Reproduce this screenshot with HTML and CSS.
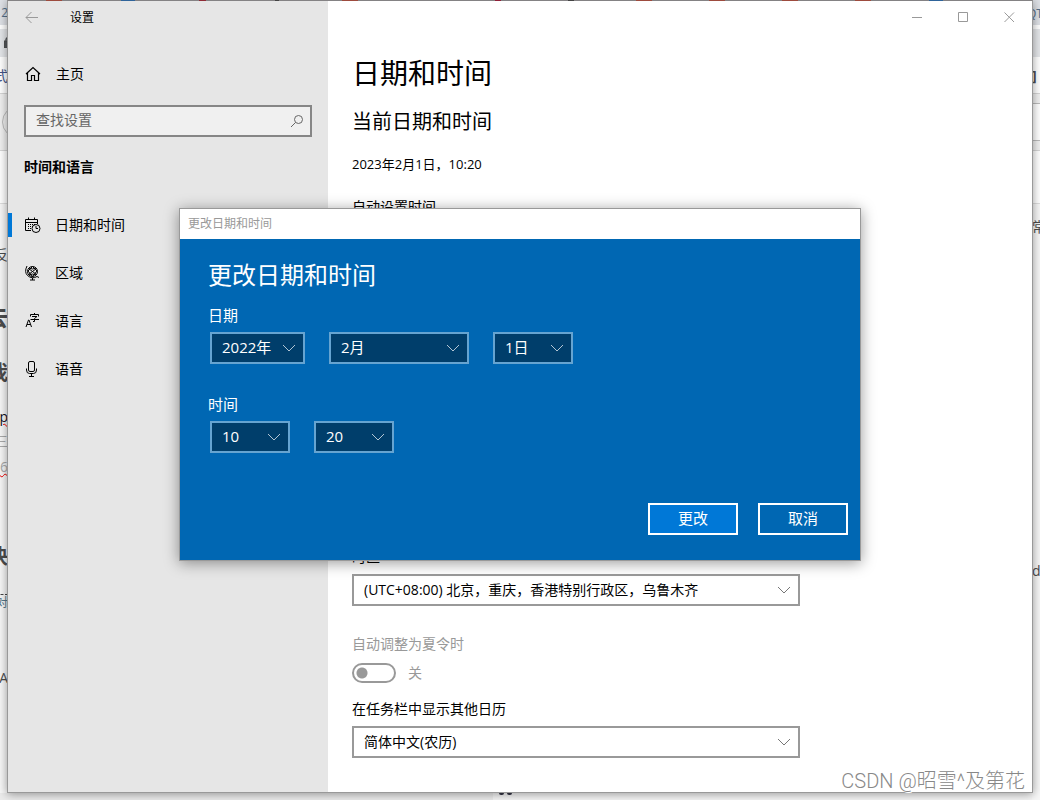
FILE: index.html
```html
<!DOCTYPE html>
<html lang="zh-CN">
<head>
<meta charset="utf-8">
<title>设置</title>
<link rel="stylesheet" href="styles.css">
</head>
<body>
<div class="desktop">
  <div class="edge edge-left" aria-hidden="true">
    <span class="bit tab" style="top:3px">2</span>
    <svg class="lock" viewBox="0 0 8 11"><rect y="4" width="8" height="7" fill="#55585c"/><path d="M2 4V3a2.500 2.500 0 0 1 5 0v1" fill="none" stroke="#55585c" stroke-width="1.500"/></svg>
    <span class="bit link" style="top:66px">式</span>
    <span class="ring"></span>
    <span class="bit" style="top:245px">反</span>
    <span class="bit big" style="top:307px">去</span>
    <span class="bit mid" style="top:363px">我</span>
    <span class="bit typo dark" style="top:407px">p</span>
    <span class="bit faint" style="top:431px">三</span>
    <span class="bit faint typo" style="top:457px">6</span>
    <span class="bit mid" style="top:547px">决</span>
    <span class="bit dash" style="top:594px">对</span>
    <span class="bit" style="top:668px">A</span>
  </div>
  <div class="edge edge-right" aria-hidden="true">
    <span class="bit tab" style="top:4px">QT</span>
    <span class="bit bracket" style="top:66px">]</span>
    <span class="panel"></span>
    <span class="bit" style="top:217px">常</span>
    <span class="bit" style="top:561px">d</span>
  </div>
  <div class="edge-bottom" aria-hidden="true"><i></i><i></i></div>

  <div class="window">
    <aside class="sidebar">
      <header class="titlebar">
        <button class="back" type="button" aria-label="后退"><svg width="14" height="14" viewBox="0 0 14 14"><path d="M13 6.500H1M6.500 1 1 6.500l5.500 5.500"/></svg></button>
        <span class="app-name">设置</span>
      </header>
      <a class="home" href="#">
        <svg width="16" height="16" viewBox="0 0 16 16"><path d="M1 8 8 1.500 15 8M2.500 7V14.500H6.500V9.500H9.500V14.500H13.500V7" stroke-width="1.200"/></svg>
        <span>主页</span>
      </a>
      <div class="search">
        <input type="text" placeholder="查找设置" aria-label="查找设置">
        <svg width="14" height="14" viewBox="0 0 14 14"><circle cx="8.500" cy="5.500" r="4"/><path d="M5.500 8.500 1 13"/></svg>
      </div>
      <h2 class="group">时间和语言</h2>
      <nav class="nav">
        <a class="active" href="#">
          <svg width="16" height="16" viewBox="0 0 16 16"><path d="M6 13.500H.5V2.500H12.500V7M.5 5.500H12.500M3.500.5V3M9.500.5V3"/><path d="M3 7.500H10M3 9.500H8M3 11.500H6" stroke-dasharray="1 1"/><circle cx="11" cy="11.500" r="4"/><path d="M11 9V11.500H13"/></svg>
          <span>日期和时间</span>
        </a>
        <a href="#">
          <svg width="16" height="16" viewBox="0 0 16 16"><circle cx="7.500" cy="6.500" r="5"/><path d="M3.500 3.500 11.500 9.500M11.500 3.500 3.500 9.500M7.500 1.500 3 6 7.500 11.500 12 6ZM4 3Q7.500 5 11 3M4 10Q7.500 8 11 10M2 1Q-1 7 2.500 10.500Q7 14.500 12 11.500L14 12.500M7.500 13V15M5 15H10"/></svg>
          <span>区域</span>
        </a>
        <a href="#">
          <svg width="16" height="16" viewBox="0 0 16 16"><path d="M1 14 3.500 7H4L6.500 14M2 11.500H5.500M5.500 3.500V1.500H13.500V3.500M9.500 0V1.500M7 3.500H12L9.500 5.500V8.500H8M5.500 6.500H14"/></svg>
          <span>语言</span>
        </a>
        <a href="#">
          <svg width="16" height="16" viewBox="0 0 16 16"><rect x="3.500" y=".5" width="6" height="10" rx="1.500"/><path d="M1.500 7.500V9Q1.500 12.500 4.500 12.500H8.500Q11.500 12.500 11.500 9V7.500M6.500 12.500V15.500M4 15.500H9"/></svg>
          <span>语音</span>
        </a>
      </nav>
    </aside>

    <main class="content">
      <header class="controls">
        <button type="button" aria-label="最小化"><svg width="11" height="11" viewBox="0 0 11 11"><path d="M0 5.500H10"/></svg></button>
        <button type="button" aria-label="最大化"><svg width="11" height="11" viewBox="0 0 11 11"><path d="M.5.500H9.500V9.500H.5Z"/></svg></button>
        <button type="button" aria-label="关闭"><svg width="11" height="11" viewBox="0 0 11 11"><path d="M.5.500 10 10M10 .5.500 10"/></svg></button>
      </header>
      <div class="page">
        <h1>日期和时间</h1>
        <h2>当前日期和时间</h2>
        <p class="now">2023年2月1日，10:20</p>
        <section class="auto-time">自动设置时间</section>
        <div class="field">
          <label for="zone">时区</label>
          <div class="select">
            <select id="zone"><option>(UTC+08:00) 北京，重庆，香港特别行政区，乌鲁木齐</option></select>
            <svg width="14" height="8" viewBox="0 0 14 8"><path d="M1 1 7 7 13 1"/></svg>
          </div>
        </div>
        <div class="dst">
          <label for="dst">自动调整为夏令时</label>
          <div class="toggle"><input type="checkbox" id="dst" role="switch" disabled><span>关</span></div>
        </div>
        <div class="field">
          <label for="calendar">在任务栏中显示其他日历</label>
          <div class="select">
            <select id="calendar"><option>简体中文(农历)</option></select>
            <svg width="14" height="8" viewBox="0 0 14 8"><path d="M1 1 7 7 13 1"/></svg>
          </div>
        </div>
      </div>
    </main>
  </div>

  <div class="overlay">
    <div class="dialog" role="dialog" aria-labelledby="dialog-title">
      <div class="dialog-bar">更改日期和时间</div>
      <form class="dialog-body">
        <h2 id="dialog-title">更改日期和时间</h2>
        <fieldset>
          <legend>日期</legend>
          <div class="pickers">
            <div class="select year"><select aria-label="年"><option>2022年</option></select><svg width="14" height="8" viewBox="0 0 14 8"><path d="M1 1 7 7 13 1"/></svg></div>
            <div class="select month"><select aria-label="月"><option>2月</option></select><svg width="14" height="8" viewBox="0 0 14 8"><path d="M1 1 7 7 13 1"/></svg></div>
            <div class="select"><select aria-label="日"><option>1日</option></select><svg width="14" height="8" viewBox="0 0 14 8"><path d="M1 1 7 7 13 1"/></svg></div>
          </div>
        </fieldset>
        <fieldset>
          <legend>时间</legend>
          <div class="pickers">
            <div class="select"><select aria-label="时"><option>10</option></select><svg width="14" height="8" viewBox="0 0 14 8"><path d="M1 1 7 7 13 1"/></svg></div>
            <div class="select"><select aria-label="分"><option>20</option></select><svg width="14" height="8" viewBox="0 0 14 8"><path d="M1 1 7 7 13 1"/></svg></div>
          </div>
        </fieldset>
        <div class="actions">
          <button class="primary" type="button">更改</button>
          <button type="button">取消</button>
        </div>
      </form>
    </div>
  </div>

  <div class="watermark">CSDN @昭雪^及第花</div>
</div>
</body>
</html>
```
FILE: styles.css
```css
* { box-sizing: border-box; }

body {
  margin: 0;
  font: 14px/20px "Open Sans", "Noto Sans CJK SC", sans-serif;
  color: #000;
}

h1, h2, p { margin: 0; font-weight: 400; }
a { color: inherit; text-decoration: none; }
button, input, select { font: inherit; color: inherit; }
button { padding: 0; border: 0; background: none; }
svg { fill: none; stroke: currentColor; flex: none; }

.desktop {
  position: relative;
  display: flex;
  height: 100vh;
  min-height: 800px;
  padding: 0 7px 7px;
  overflow: hidden;
  background: #f5f5f5;
}

/* Browser page showing around the window */
.edge {
  position: absolute;
  top: 0;
  bottom: 0;
  width: 8px;
  overflow: hidden;
  color: #4d4d4d;
  background: linear-gradient(#dee1e6 25px, #fff 25px 29px, #e4e6e9 29px 57px, #fff 57px 93px, #d5d5d5 93px 94px, #f0f0f0 94px 150px, #d5d5d5 150px 151px, #fff 151px 203px, #ddd 203px 204px, #f7f7f7 204px);
}
.edge-left { left: 0; }
.edge-right { right: 0; }
.bit { position: absolute; right: 0; white-space: nowrap; }
.edge-right .bit { right: auto; left: 0; }
.edge .tab { font-size: 12px; color: #56708a; }
.edge-right .tab { left: -5px; }
.link { color: #44558a; }
.big { font-size: 24px; font-weight: 700; }
.mid { font-size: 20px; font-weight: 700; }
.dark { color: #112; }
.faint { color: #aaa; }
.typo { text-decoration: underline wavy #e00 1px; }
.dash { font-size: 12px; line-height: 16px; border-top: 1px dashed #444; color: #55798c; }
.bracket { font-weight: 700; }
.lock { position: absolute; left: 4px; top: 37px; width: 8px; height: 11px; }
.ring { position: absolute; left: 2px; top: 106px; width: 32px; height: 32px; border: 1px solid #bbb; border-radius: 50%; }
.panel { position: absolute; left: 0; right: 0; top: 103px; height: 38px; border: solid #bbb; border-width: 1px 0; background: #fff; }
.edge-bottom {
  position: absolute;
  left: 0;
  bottom: 0;
  width: 512px;
  height: 7px;
  display: flex;
  justify-content: flex-end;
  gap: 3px;
  background: linear-gradient(90deg, #ebebeb 493px, #f5f5f5 493px);
}
.edge-bottom i { width: 5px; height: 2px; border-radius: 0 0 2px 2px; background: #334; }

.window {
  position: relative;
  flex: 1;
  display: grid;
  grid-template-columns: 320px 1fr;
  border: 1px solid #999;
  border-top-color: #848284;
  background: #fff;
  box-shadow: 0 1px 9px rgba(0, 0, 0, .4);
}
/* Tab icons seen through the translucent top border */
.window::before {
  content: "";
  position: absolute;
  inset: -1px 0 auto;
  height: 1px;
  background: linear-gradient(90deg, transparent 38px, #9d4b3e 38px 54px, transparent 54px 113px, #2f649a 113px 127px, transparent 127px 191px, #8f2b36 191px 198px, transparent 198px 267px, #444 267px 271px, transparent 271px 334px, #9d4b3e 334px 350px, transparent 350px 487px, #8f2038 487px 493px, transparent 493px 560px, #444 560px 566px, transparent 566px 628px, #9d4b3e 628px 644px, transparent 644px 701px, #9d4b3e 701px 717px, transparent 717px 774px, #9d4b3e 774px 790px, transparent 790px 847px, #9d4b3e 847px 863px, transparent 863px 921px, #2f649a 921px 935px, transparent 935px);
}

.sidebar { background: #e6e6e6; }
.titlebar { display: flex; align-items: center; height: 33px; padding-left: 17px; font-size: 12px; }
.back { display: flex; margin-right: 31px; color: #999; }
.home { display: flex; align-items: center; gap: 15px; height: 48px; margin-top: 16px; padding-left: 17px; }
.search { position: relative; margin: 7px 16px 0; }
.search input {
  display: block;
  width: 100%;
  height: 32px;
  padding: 0 32px 3px 10px;
  border: 2px solid #868686;
  border-radius: 0;
  background: #f0f0f0;
}
.search input::placeholder { color: #666; opacity: 1; }
.search svg { position: absolute; right: 8px; top: 9px; color: #666; }
.group { margin: 20px 16px 24px; font-size: 14px; font-weight: 700; }
.nav a { display: flex; align-items: center; gap: 14px; height: 48px; padding-left: 17px; }
.nav .active { background: linear-gradient(#0078d7, #0078d7) left center / 4px 24px no-repeat; }

.content { min-width: 0; }
.controls { display: flex; justify-content: flex-end; }
.controls button { display: flex; align-items: center; justify-content: center; width: 46px; height: 33px; color: #999; }
.page { padding: 19px 24px 0; }
.page h1 { font-size: 28px; line-height: 40px; }
.page h2 { margin-top: 15px; font-size: 20px; line-height: 28px; }
.now { margin-top: 18px; font-size: 13px; }
.auto-time { height: 350px; margin-top: 23px; }

.select { position: relative; }
.select select {
  display: block;
  appearance: none;
  width: 100%;
  height: 32px;
  padding: 0 32px 0 10px;
  border: 2px solid #999;
  border-radius: 0;
  background: #fff;
}
.select svg { position: absolute; right: 9px; top: 12px; color: #777; pointer-events: none; }
.field label { display: block; margin-bottom: 7px; }
.field .select { max-width: 448px; }
.dst { margin: 28px 0 16px; color: #999; }
.dst label { display: block; }
.toggle { display: flex; align-items: center; gap: 12px; margin-top: 9px; }
.toggle input {
  appearance: none;
  width: 44px;
  height: 20px;
  margin: 0;
  border: 2px solid #999;
  border-radius: 10px;
  background: radial-gradient(circle at 8px 8px, #999 5px, transparent 6px);
}

.overlay { position: absolute; inset: 0; display: flex; justify-content: center; align-items: flex-start; padding-top: 208px; }
.dialog { width: 682px; border: 1px solid #999; box-shadow: 0 2px 14px rgba(0, 0, 0, .4); }
.dialog-bar { height: 30px; padding: 5px 8px; font-size: 12px; color: #999; background: #fff; }
.dialog-body { padding: 20px 12px 25px 28px; font-size: 15px; color: #fff; background: #0067b3; }
.dialog-body h2 { margin-bottom: 14px; font-size: 24px; line-height: 32px; }
.dialog-body fieldset { margin: 0 0 30px; padding: 0; border: 0; }
.dialog-body legend { padding: 0; }
.pickers { display: flex; gap: 24px; padding: 7px 2px 0; }
.pickers .select { width: 80px; }
.pickers .year { width: 95px; }
.pickers .month { width: 140px; }
.pickers select { padding: 0 0 2px 10px; border-color: #66a4d1; background: #003e6b; }
.pickers svg { color: #b3c5d3; }
.actions { display: flex; justify-content: flex-end; gap: 20px; margin-top: 50px; }
.actions button { width: 90px; height: 32px; padding-bottom: 2px; border: 2px solid #fff; }
.actions .primary { background: #0078d7; }

.watermark {
  position: absolute;
  right: 15px;
  bottom: 5px;
  font: 20px/28px Roboto, "Noto Sans CJK SC", sans-serif;
  font-weight: 300;
  color: #888;
  text-shadow: 1px 1px 0 #fff;
}
```
